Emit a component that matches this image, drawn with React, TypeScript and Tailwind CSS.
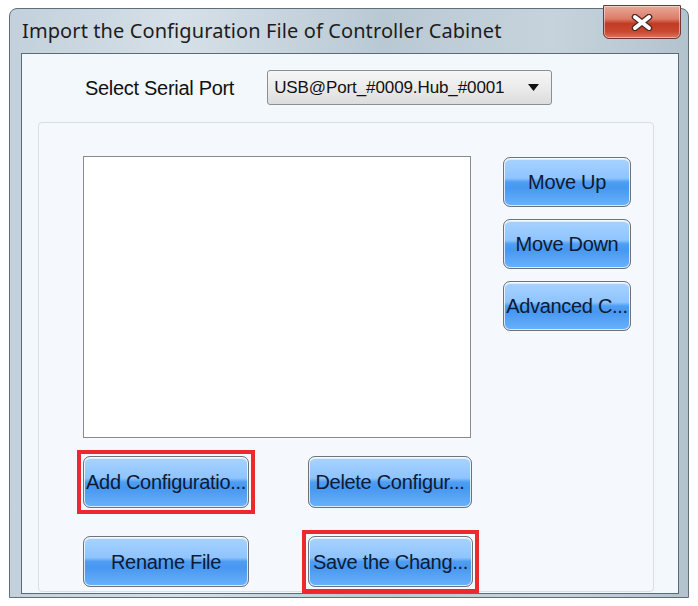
const btn =
  "flex items-center justify-center rounded-[7px] border border-[#6e7378] bg-[linear-gradient(to_bottom,#a9d3ff_0%,#8fc4ff_42%,#4f9ef3_50%,#4897f0_62%,#69b2fb_100%)] shadow-[inset_0_0_0_1px_rgba(255,255,255,0.75),inset_0_2px_0_rgba(255,255,255,0.6)] text-[20px] leading-none text-[#0f1a33] whitespace-nowrap overflow-hidden tracking-[-0.3px]";

function GlassButton({ label, className }: { label: string; className: string }) {
  return <button className={`${btn} ${className}`}>{label}</button>;
}

function Marked({ children }: { children: React.ReactNode }) {
  return (
    <div className="relative">
      {children}
      <span className="pointer-events-none absolute -inset-[6px] border-[4px] border-[#ec2a2e]" />
    </div>
  );
}

export default function App() {
  return (
    <div
      className="w-[698px] h-[606px] bg-white pt-[8px] pl-[9px]"
      style={{ fontFamily: '"Liberation Sans", Arial, sans-serif' }}
    >
      {/* window frame */}
      <div className="relative w-[680px] h-[590px] flex flex-col rounded-t-[8px] border border-[#5f6e7a] bg-[linear-gradient(to_right,#c2d1db_0%,#d6e0e8_25%,#b9c9d4_55%,#c6d3dc_80%,#b3c3ce_100%)]">
        {/* title bar */}
        <div className="h-[44px] shrink-0 flex items-center pl-[12px] pb-[1px]">
          <span
            className="text-[20px] text-[#1d1d1d] tracking-[0.1px]"
            style={{ fontFamily: '"Noto Sans", "Open Sans", sans-serif' }}
          >
            Import the Configuration File of Controller Cabinet
          </span>
        </div>

        {/* close button */}
        <div className="absolute top-[-4px] left-[593px] w-[78px] h-[34px] rounded-b-[6px] border border-[#6b3a32] bg-[linear-gradient(to_bottom,#e9a899_0%,#dc7d69_40%,#c23b24_55%,#c9482f_80%,#dc7660_100%)] shadow-[inset_0_0_0_1px_rgba(255,255,255,0.45)] flex items-center justify-center">
          <svg width="22" height="17" viewBox="0 0 22 17">
            <path
              d="M4 3 L18 14 M18 3 L4 14"
              stroke="#4a2a25"
              strokeWidth="6.5"
              strokeLinecap="round"
            />
            <path
              d="M4 3 L18 14 M18 3 L4 14"
              stroke="#ffffff"
              strokeWidth="4"
              strokeLinecap="round"
            />
          </svg>
        </div>

        {/* client area */}
        <div className="flex-1 ml-[11px] mr-[9px] mb-[3px] border border-[#5a6a76] bg-[#f3f8fc] flex flex-col">
          <div className="flex items-center h-[66px] pl-[63px] pt-[1px]">
            <span className="text-[20px] text-[#111] tracking-[-0.3px]">Select Serial Port</span>
            <div className="ml-[33px] w-[285px] h-[35px] rounded-[3px] border border-[#8a8f94] bg-[linear-gradient(to_bottom,#f6f6f6_0%,#ebebeb_50%,#dcdcdc_100%)] flex items-center justify-between pl-[6px] pr-[12px]">
              <span className="text-[17px] text-[#111] tracking-[-0.1px]">USB@Port_#0009.Hub_#0001</span>
              <svg width="11" height="7" viewBox="0 0 11 7">
                <path d="M0 0 H11 L5.5 7 Z" fill="#111" />
              </svg>
            </div>
          </div>

          {/* group box */}
          <div className="flex-1 ml-[16px] mr-[24px] mt-[2px] mb-[1px] rounded-[4px] border border-[#d8e0e6] bg-[#f5f9fd] pl-[44px] pt-[33px]">
            <div className="flex">
              <div className="w-[388px] h-[282px] bg-white border border-[#8a8a8a]" />
              <div className="ml-[32px] pt-[1px] flex flex-col gap-[12px]">
                <GlassButton label="Move Up" className="w-[128px] h-[50px]" />
                <GlassButton label="Move Down" className="w-[128px] h-[50px]" />
                <GlassButton label="Advanced C..." className="w-[128px] h-[50px]" />
              </div>
            </div>

            <div className="flex mt-[18px] gap-[59px]">
              <Marked>
                <GlassButton label="Add Configuratio..." className="w-[166px] h-[52px]" />
              </Marked>
              <GlassButton label="Delete Configur..." className="w-[164px] h-[52px]" />
            </div>

            <div className="flex mt-[28px] gap-[59px]">
              <GlassButton label="Rename File" className="w-[166px] h-[51px]" />
              <Marked>
                <GlassButton label="Save the Chang..." className="w-[165px] h-[51px]" />
              </Marked>
            </div>
          </div>
        </div>
      </div>
    </div>
  );
}
